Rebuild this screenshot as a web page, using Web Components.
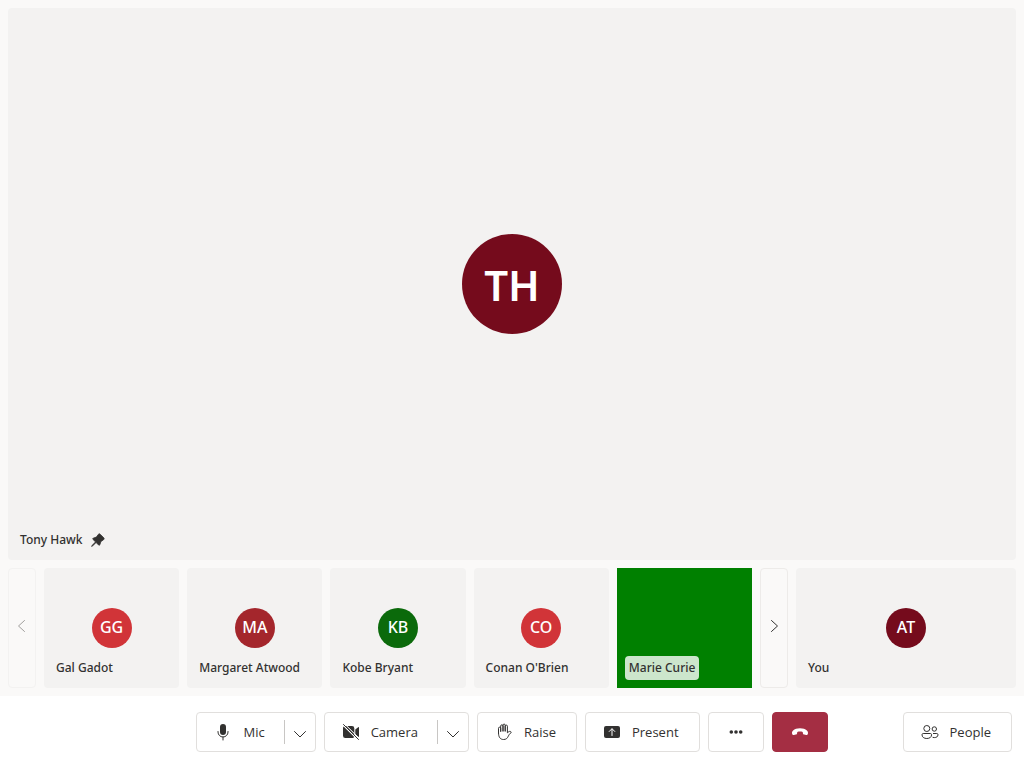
<!DOCTYPE html>
<html lang="en">
<head>
<meta charset="utf-8">
<meta name="viewport" content="width=device-width, initial-scale=1">
<title>Call</title>
<style>
  body {
    margin: 0;
    font-family: "Open Sans", "Noto Sans", sans-serif;
    color: #323130;
  }
</style>
</head>
<body>
<call-screen></call-screen>

<script>
const ICONS = {
  mic: `<rect x="7" y="2" width="6" height="11" rx="3"/>
    <path d="M5 9.5v.5a5 5 0 0 0 10 0v-.5M10 15v3" fill="none" stroke="currentColor" stroke-linecap="round"/>`,
  cameraOff: `<path d="M4.6 4H11a2.3 2.3 0 0 1 2.3 2.3v6.500L4.600 4ZM2.600 4.400 13.200 15a2.300 2.300 0 0 1-1.700 1H4.300A2.300 2.300 0 0 1 2 13.700V6.300c0-.8.2-1.400.6-1.900ZM14.300 7.500 17.200 5.200c.4-.3.8 0 .8.4v8.800c0 .4-.4.6-.8.4L14.300 12.500Z"/>
    <path d="M3.400 1.600l15 15" stroke="#fff" stroke-width="1"/>
    <path d="M2.500 2.500l15 15" fill="none" stroke="currentColor" stroke-linecap="round"/>`,
  hand: `<path d="M4.500 11V6.300a1.100 1.100 0 0 1 2.200 0V9.500M6.700 9V4a1.150 1.150 0 0 1 2.300 0V9M9 9V3.200a1.100 1.100 0 0 1 2.200 0V9M11.200 9V4.200a1.100 1.100 0 0 1 2.200 0V10.800L14.800 9.700c.8-.6 1.900-.3 2.400.3.2.2.1.5-.1.6-1.500 1.100-2.100 2.200-2.800 3.600C13.200 16.400 12.200 17.500 9.500 17.500 6.300 17.500 4.500 15.200 4.500 11" fill="none" stroke="currentColor" stroke-linejoin="round" stroke-linecap="round"/>`,
  present: `<rect x="2" y="4" width="16" height="12" rx="2"/>
    <path d="M10 13.500V7M7.200 9.500 10 6.700l2.800 2.800" fill="none" stroke="#fff" stroke-linecap="round" stroke-linejoin="round"/>`,
  more: `<circle cx="5.300" cy="10" r="1.800"/><circle cx="10" cy="10" r="1.800"/><circle cx="14.700" cy="10" r="1.800"/>`,
  hangUp: `<path d="M10 6.300c3 0 5.300.8 6.900 2.300 1 .9 1.300 2 1 3.200-.2.900-1 1.400-1.800 1.200l-1.900-.4c-.7-.1-1.200-.6-1.300-1.300l-.2-1.400c-1.700-.5-3.700-.5-5.400 0l-.2 1.400c-.1.700-.6 1.200-1.300 1.300l-1.900.4c-.8.2-1.600-.3-1.800-1.200-.3-1.200 0-2.300 1-3.200C4.700 7.100 7 6.300 10 6.300Z"/>`,
  people: `<g fill="none" stroke="currentColor"><circle cx="6.800" cy="6.500" r="3"/><circle cx="14.300" cy="7" r="2.200"/>
    <path d="M3.200 11.500h7.200c.7 0 1.200.5 1.200 1.200 0 2.400-2 3.800-4.800 3.800S2 15.100 2 12.700c0-.7.5-1.200 1.200-1.200ZM13 11.500h3.800c.7 0 1.200.5 1.200 1.200 0 2-1.600 2.900-3.700 2.900-.6 0-1.200-.1-1.700-.3"/></g>`,
  pin: `<path d="M10.400 3c.6-.8 1.600-.9 2.300-.2l4.500 4.500c.7.700.6 1.700-.2 2.300l-3.400 2.400-1.300 4c-.2.700-1 .8-1.500.3L7.600 13.100 3.400 17.200 2 18l.8-1.400 4.100-4.200-3.200-3.200c-.5-.5-.4-1.300.3-1.500l4-1.300L10.400 3Z" stroke="currentColor" stroke-width="1"/>`,
  chevronDown: `<path d="M4.500 7.500 10 13l5.500-5.500" fill="none" stroke="currentColor" stroke-linecap="round"/>`,
  chevronLeft: `<path d="M12.500 4.500 6.500 10l6 5.500" fill="none" stroke="currentColor" stroke-linecap="round"/>`,
  chevronRight: `<path d="M7.500 4.500 13.500 10l-6 5.500" fill="none" stroke="currentColor" stroke-linecap="round"/>`
};

const RESET = `
  *, *::before, *::after { box-sizing: border-box; }
  button { font: inherit; color: inherit; margin: 0; padding: 0; border: 0; background: none; cursor: pointer; }
`;

class BaseElement extends HTMLElement {
  connectedCallback() {
    if (this.shadowRoot) return;
    const root = this.attachShadow({ mode: "open" });
    root.innerHTML = `<style>${RESET}${this.styles()}</style>${this.markup()}`;
  }
}

customElements.define("ui-icon", class extends BaseElement {
  styles() {
    return `:host { display: block; flex: none; width: var(--icon-size, 20px); height: var(--icon-size, 20px); }
      svg { display: block; width: 100%; height: 100%; }`;
  }
  markup() {
    return `<svg viewBox="0 0 20 20" fill="currentColor" aria-hidden="true">${ICONS[this.getAttribute("name")]}</svg>`;
  }
});

customElements.define("user-avatar", class extends BaseElement {
  styles() {
    return `:host {
        display: grid; justify-items: center; align-items: start; border-radius: 50%;
        width: 40px; height: 40px; line-height: 38px;
        font-family: "Noto Sans", "Open Sans", sans-serif; font-size: 16px; font-weight: 500;
        color: #fff; background: var(--persona, #750b1c);
      }
      :host([size="large"]) { width: 100px; height: 100px; font-size: 42px; line-height: 102px; font-weight: 600; }`;
  }
  markup() { return `<slot></slot>`; }
});

customElements.define("video-tile", class extends BaseElement {
  styles() {
    return `:host {
        display: grid; min-width: 0; border-radius: 4px;
        background: #f3f2f1;
      }
      :host([video]) { background: #008000; border-radius: 0; }
      .media, .name { grid-area: 1 / 1; }
      .media { display: grid; place-items: center; }
      .name {
        place-self: end start; margin: 8px; padding: 0 4px; height: 24px; border-radius: 4px;
        display: flex; align-items: center; gap: 8px; white-space: nowrap;
        font-family: "Noto Sans", "Open Sans", sans-serif;
        font-size: 12px; line-height: 16px; font-weight: 500; --icon-size: 16px;
      }
      :host([video]) .name { background: rgba(255, 255, 255, .8); }`;
  }
  markup() {
    return `<div class="media"><slot></slot></div>
      <div class="name"><span>${this.getAttribute("name")}</span>${this.hasAttribute("pinned") ? `<ui-icon name="pin"></ui-icon>` : ""}</div>`;
  }
});

customElements.define("page-button", class extends BaseElement {
  styles() {
    return `:host { display: flex; flex: none; width: 28px; }
      button { flex: 1; display: grid; place-items: center; padding-bottom: 4px; border: 1px solid #edebe9; border-radius: 4px; }
      button:disabled { border-color: #f3f2f1; color: #a19f9d; cursor: default; }`;
  }
  markup() {
    const next = this.getAttribute("direction") === "next";
    return `<button type="button" aria-label="${next ? "Next" : "Previous"} page"${this.hasAttribute("disabled") ? " disabled" : ""}>
      <ui-icon name="${next ? "chevronRight" : "chevronLeft"}"></ui-icon></button>`;
  }
});

customElements.define("control-button", class extends BaseElement {
  styles() {
    return `:host { display: flex; height: 40px; font-size: 13px; line-height: 20px; }
      .frame { display: flex; align-items: center; border: 1px solid #e1dfdd; border-radius: 4px; background: #fff; }
      .main { display: flex; align-items: center; justify-content: center; gap: 10px; height: 100%; padding: 0 20px 0 16px; white-space: nowrap; }
      .menu { display: grid; place-items: center; width: 31px; height: 24px; padding-top: 4px; border-left: 1px solid #c8c6c4; }
      :host([split]) .main { padding-right: 19px; }
      :host([compact]) .main { width: 54px; padding: 0; }
      :host([danger]) .frame { background: #a42e43; border-color: #a42e43; color: #fff; }`;
  }
  markup() {
    const label = this.getAttribute("label");
    const compact = this.hasAttribute("compact");
    return `<div class="frame">
      <button class="main" type="button"${compact ? ` aria-label="${label}"` : ""}>
        <ui-icon name="${this.getAttribute("icon")}"></ui-icon>${compact ? "" : `<span>${label}</span>`}
      </button>
      ${this.hasAttribute("split") ? `<button class="menu" type="button" aria-label="${label} options"><ui-icon name="chevronDown"></ui-icon></button>` : ""}
    </div>`;
  }
});

customElements.define("participant-strip", class extends BaseElement {
  styles() {
    return `:host { display: flex; gap: 8px; height: 120px; }
      .tiles { flex: 1; display: grid; grid-template-columns: repeat(5, minmax(0, 1fr)); gap: 8px; }
      .local { flex: none; width: 220px; }`;
  }
  markup() {
    return `<page-button direction="previous" disabled></page-button>
      <div class="tiles">
        <video-tile name="Gal Gadot"><user-avatar style="--persona:#d13438">GG</user-avatar></video-tile>
        <video-tile name="Margaret Atwood"><user-avatar style="--persona:#a4262c">MA</user-avatar></video-tile>
        <video-tile name="Kobe Bryant"><user-avatar style="--persona:#0b6a0b">KB</user-avatar></video-tile>
        <video-tile name="Conan O'Brien"><user-avatar style="--persona:#d13438">CO</user-avatar></video-tile>
        <video-tile name="Marie Curie" video></video-tile>
      </div>
      <page-button direction="next"></page-button>
      <video-tile class="local" name="You"><user-avatar>AT</user-avatar></video-tile>`;
  }
});

customElements.define("control-bar", class extends BaseElement {
  styles() {
    return `:host { display: grid; grid-template-columns: 1fr auto 1fr; padding: 16px 12px; background: #fff; }
      .center { grid-column: 2; display: flex; gap: 8px; }
      .side { justify-self: end; }`;
  }
  markup() {
    return `<div class="center">
        <control-button icon="mic" label="Mic" split></control-button>
        <control-button icon="cameraOff" label="Camera" split></control-button>
        <control-button icon="hand" label="Raise"></control-button>
        <control-button icon="present" label="Present"></control-button>
        <control-button icon="more" label="More" compact></control-button>
        <control-button icon="hangUp" label="Leave" compact danger></control-button>
      </div>
      <control-button class="side" icon="people" label="People"></control-button>`;
  }
});

customElements.define("call-screen", class extends BaseElement {
  styles() {
    return `:host { display: flex; flex-direction: column; min-height: 100vh; }
      main { flex: 1; display: flex; flex-direction: column; gap: 8px; padding: 8px; background: #faf9f8; }
      .stage { flex: 1; }`;
  }
  markup() {
    return `<main>
        <video-tile class="stage" name="Tony Hawk" pinned><user-avatar size="large">TH</user-avatar></video-tile>
        <participant-strip></participant-strip>
      </main>
      <control-bar></control-bar>`;
  }
});
</script>
</body>
</html>
